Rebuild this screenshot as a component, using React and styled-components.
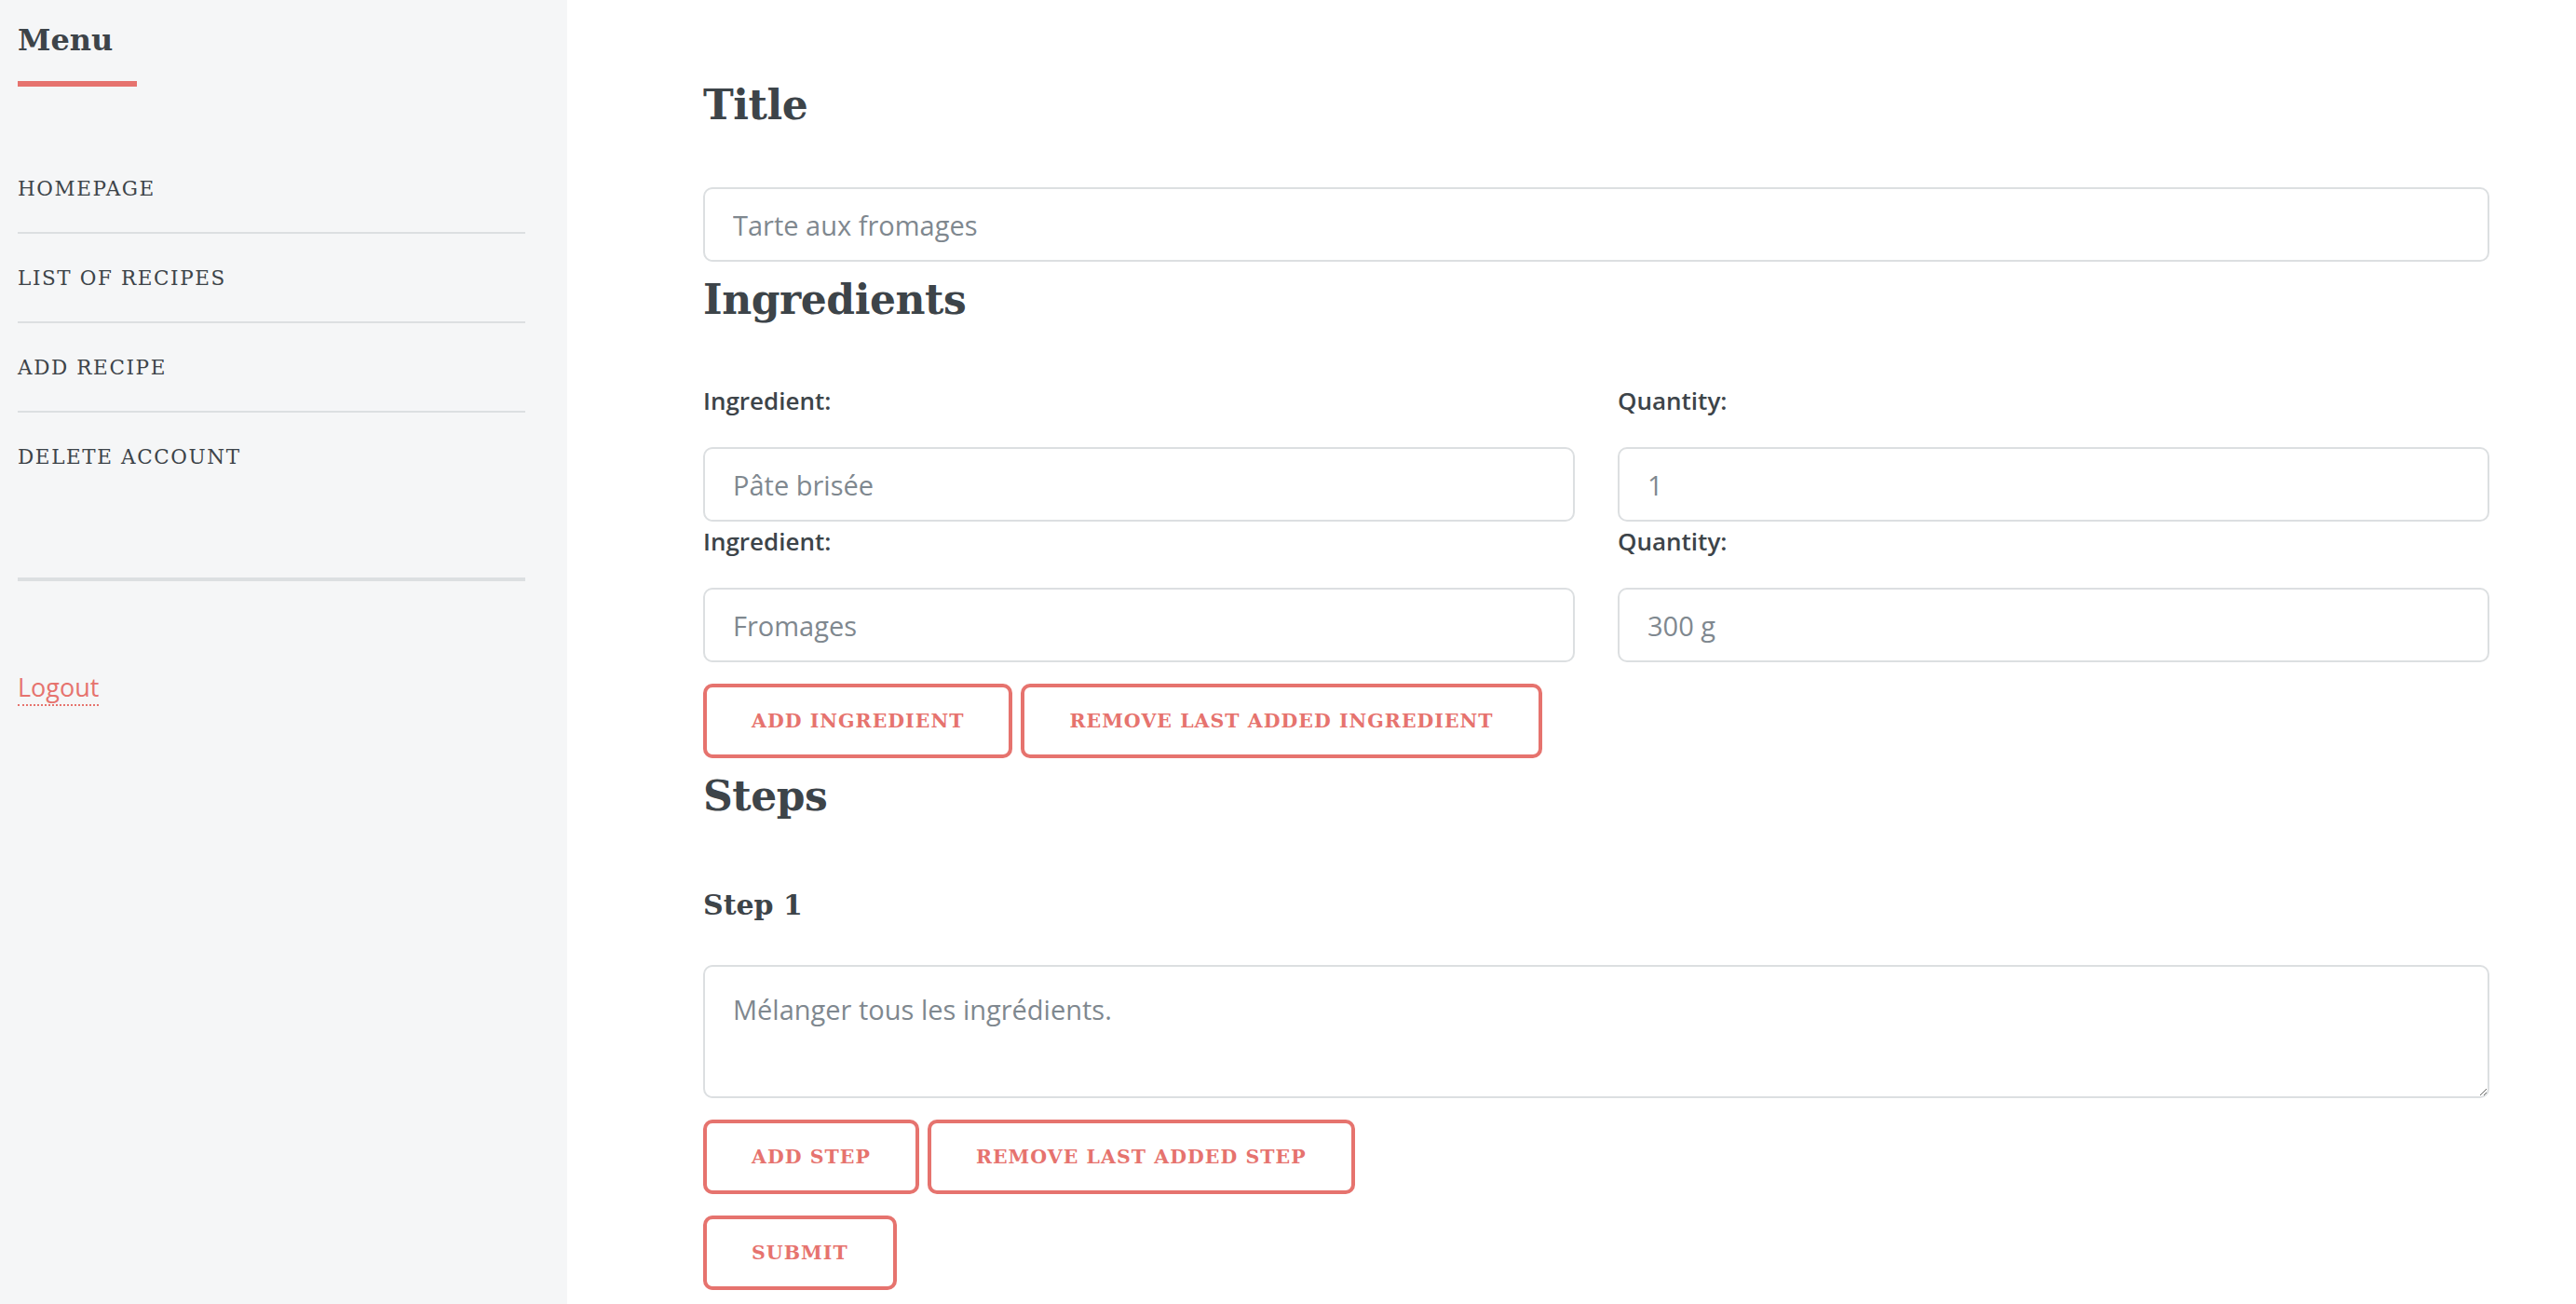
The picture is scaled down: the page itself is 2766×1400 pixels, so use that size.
import React from 'react'
import styled, { createGlobalStyle } from 'styled-components'

const accent = '#e6736e'
const ink = '#3d4449'
const line = '#dcdfe1'

const GlobalStyle = createGlobalStyle`
  html, body {
    margin: 0;
    padding: 0;
    background: #fff;
  }
  body {
    font-family: "Open Sans", "Noto Sans", sans-serif;
    color: #7f888f;
  }
  * {
    box-sizing: border-box;
  }
`

const Wrapper = styled.div`
  display: flex;
  min-height: 100vh;
`

const Sidebar = styled.aside`
  width: 609px;
  flex-shrink: 0;
  background: #f5f6f7;
  padding: 0 45px 0 19px;
`

const MenuHeader = styled.header`
  padding-top: 23px;
  margin-bottom: 62px;
`

const MenuTitle = styled.h2`
  display: inline-block;
  margin: 0;
  padding: 0 26px 24px 0;
  border-bottom: 6px solid ${accent};
  font-family: "DejaVu Serif", serif;
  font-weight: 700;
  font-size: 32px;
  line-height: 40px;
  color: ${ink};
`

const NavList = styled.ul`
  list-style: none;
  margin: 0;
  padding: 0;
`

const NavItem = styled.li`
  & + & {
    border-top: 2px solid ${line};
  }
`

const NavLink = styled.a`
  display: block;
  height: 94px;
  line-height: 96px;
  font-family: "DejaVu Serif", serif;
  font-size: 21.5px;
  letter-spacing: 0.075em;
  text-transform: uppercase;
  color: ${ink};
  text-decoration: none;
`

const SidebarFooter = styled.div`
  margin-top: 83px;
  border-top: 4px solid ${line};
  padding-top: 94px;
  line-height: 40px;
`

const Logout = styled.a`
  font-size: 27px;
  color: ${accent};
  text-decoration: none;
  border-bottom: 2px dotted ${accent};
`

const Main = styled.main`
  flex: 1;
  padding: 72px 93px 40px 146px;
`

const Heading = styled.h2`
  margin: 0 0 ${p => p.$mb || 46}px;
  font-family: "DejaVu Serif", serif;
  font-weight: 700;
  font-size: 44px;
  line-height: 82px;
  letter-spacing: -0.01em;
  color: ${ink};
`

const SubHeading = styled.h3`
  margin: 0 0 34px;
  font-family: "DejaVu Serif", serif;
  font-weight: 700;
  font-size: 30px;
  line-height: 60px;
  color: ${ink};
`

const TextInput = styled.input`
  display: block;
  width: 100%;
  height: 80px;
  padding: 0 30px;
  border: 2px solid ${line};
  border-radius: 10px;
  background: #fff;
  font-family: "Open Sans", sans-serif;
  font-size: 29px;
  color: #7f888f;
  outline: none;
`

const TextArea = styled.textarea`
  display: block;
  width: 100%;
  height: 143px;
  padding: 22px 30px;
  border: 2px solid ${line};
  border-radius: 10px;
  background: #fff;
  font-family: "Open Sans", sans-serif;
  font-size: 29px;
  line-height: 48px;
  color: #7f888f;
  outline: none;
  resize: vertical;
`

const FieldGrid = styled.div`
  display: grid;
  grid-template-columns: 1fr 1fr;
  column-gap: 46px;
`

const Label = styled.label`
  display: block;
  margin-bottom: 28px;
  font-size: 26px;
  font-weight: 600;
  line-height: 43px;
  color: ${ink};
`

const ButtonRow = styled.div`
  display: flex;
  gap: 9px;
  margin: 23px 0 0;
`

const Button = styled.button`
  height: 80px;
  padding: 0 52px;
  border: 0;
  border-radius: 10px;
  background: transparent;
  box-shadow: inset 0 0 0 4px ${accent};
  font-family: "DejaVu Serif", serif;
  font-weight: 700;
  font-size: 20.5px;
  letter-spacing: 0.05em;
  text-transform: uppercase;
  color: ${accent};
  cursor: pointer;
`

const menu = ['Homepage', 'List of recipes', 'Add recipe', 'Delete account']

const ingredients = [
  { name: 'Pâte brisée', qty: '1' },
  { name: 'Fromages', qty: '300 g' },
]

export default function App() {
  return (
    <Wrapper>
      <GlobalStyle />
      <Sidebar>
        <MenuHeader>
          <MenuTitle>Menu</MenuTitle>
        </MenuHeader>
        <NavList>
          {menu.map(item => (
            <NavItem key={item}>
              <NavLink href="#">{item}</NavLink>
            </NavItem>
          ))}
        </NavList>
        <SidebarFooter>
          <Logout href="#">Logout</Logout>
        </SidebarFooter>
      </Sidebar>

      <Main>
        <Heading $mb={47}>Title</Heading>
        <TextInput defaultValue="Tarte aux fromages" />

        <Heading>Ingredients</Heading>
        {ingredients.map((ing, i) => (
          <FieldGrid key={i}>
            <div>
              <Label>Ingredient:</Label>
              <TextInput defaultValue={ing.name} />
            </div>
            <div>
              <Label>Quantity:</Label>
              <TextInput defaultValue={ing.qty} />
            </div>
          </FieldGrid>
        ))}
        <ButtonRow>
          <Button>Add ingredient</Button>
          <Button>Remove last added ingredient</Button>
        </ButtonRow>

        <Heading>Steps</Heading>
        <SubHeading>Step 1</SubHeading>
        <TextArea defaultValue="Mélanger tous les ingrédients." />
        <ButtonRow>
          <Button>Add step</Button>
          <Button>Remove last added step</Button>
        </ButtonRow>
        <ButtonRow>
          <Button>Submit</Button>
        </ButtonRow>
      </Main>
    </Wrapper>
  )
}
